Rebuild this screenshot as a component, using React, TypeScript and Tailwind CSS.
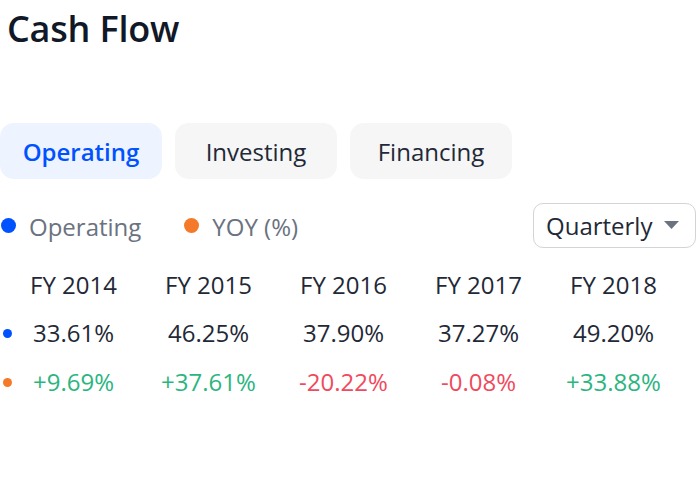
import { useState } from "react";

const years = ["FY 2014", "FY 2015", "FY 2016", "FY 2017", "FY 2018"];
const operating = ["33.61%", "46.25%", "37.90%", "37.27%", "49.20%"];
const yoy = ["+9.69%", "+37.61%", "-20.22%", "-0.08%", "+33.88%"];

const tabs = ["Operating", "Investing", "Financing"];

export default function App() {
  const [active, setActive] = useState("Operating");

  return (
    <div className="w-[696px] h-[480px] bg-white text-[#111827] font-['Open_Sans',sans-serif] overflow-hidden">
      <h1 className="pl-[7px] pt-[6px] text-[36px] leading-[46px] font-semibold tracking-[-0.2px]">Cash Flow</h1>

      <div className="flex gap-[13px] mt-[71px]">
        {tabs.map((t) => (
          <button
            key={t}
            onClick={() => setActive(t)}
            className={
              t === active
                ? "w-[162px] h-[56px] pt-[2px] rounded-[14px] bg-[#eef4ff] text-[#0052ff] text-[24px] font-semibold"
                : "w-[162px] h-[56px] pt-[2px] rounded-[14px] bg-[#f6f6f6] text-[#1f2937] text-[24px]"
            }
          >
            {t}
          </button>
        ))}
      </div>

      <div className="flex items-center mt-[24px] h-[45px]">
        <span className="ml-[1px] w-[15px] h-[15px] rounded-full bg-[#0052ff]" />
        <span className="ml-[13px] pt-[3px] text-[24px] text-[#6b7280]">Operating</span>
        <span className="ml-[43px] w-[15px] h-[15px] rounded-full bg-[#f47a2a]" />
        <span className="ml-[13px] pt-[3px] text-[24px] text-[#6b7280]">YOY (%)</span>
        <button className="ml-auto w-[163px] h-[45px] rounded-[10px] border border-[#d4d4d8] flex items-center pl-[12px] gap-[12px] text-[24px] text-[#1f2937]">
          Quarterly
          <svg width="15" height="9" viewBox="0 0 15 9">
            <path d="M0 0h15L7.5 8z" fill="#6b7280" />
          </svg>
        </button>
      </div>

      <div className="mt-[13px] text-[24px]">
        <div className="flex h-[48px] items-center pl-[6px]">
          {years.map((y) => (
            <div key={y} className="w-[135px] text-center text-[#1f2937]">{y}</div>
          ))}
        </div>
        <div className="relative flex h-[48px] items-center pl-[6px]">
          <span className="absolute left-[3px] top-[20px] w-[9px] h-[9px] rounded-full bg-[#0052ff]" />
          {operating.map((v) => (
            <div key={v} className="w-[135px] text-center text-[#1f2937]">{v}</div>
          ))}
        </div>
        <div className="relative flex h-[49px] items-center pl-[6px]">
          <span className="absolute left-[3px] top-[21px] w-[9px] h-[9px] rounded-full bg-[#f47a2a]" />
          {yoy.map((v) => (
            <div
              key={v}
              className={v.startsWith("-") ? "w-[135px] text-center text-[#f04a5e]" : "w-[135px] text-center text-[#2bb57f]"}
            >
              {v}
            </div>
          ))}
        </div>
      </div>
    </div>
  );
}
